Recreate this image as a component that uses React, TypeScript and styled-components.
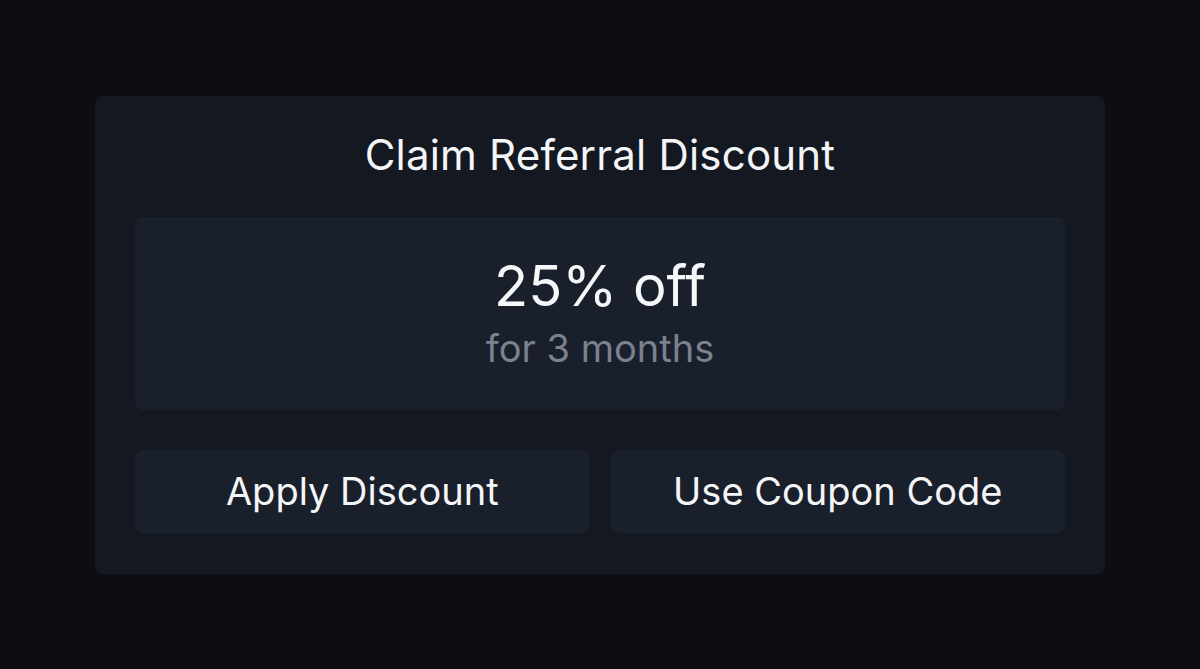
import React from 'react'
import styled, { createGlobalStyle } from 'styled-components'

const GlobalStyle = createGlobalStyle`
    html, body {
        margin: 0;
        padding: 0;
        background: #0c0e13;
    }
    body {
        font-family: Inter, 'Noto Sans', 'Liberation Sans', sans-serif;
        -webkit-font-smoothing: antialiased;
    }
`

const Page = styled.div`
    min-height: 100vh;
    display: flex;
    align-items: center;
    justify-content: center;
`

const Card = styled.section`
    width: 1010px;
    box-sizing: border-box;
    padding: 38px 40px 41px;
    background: #141821;
    border-radius: 7px;
    display: flex;
    flex-direction: column;
    gap: 40px;
`

const Title = styled.h2`
    margin: 0 0 2px;
    color: #f4f5f7;
    font-weight: 400;
    font-size: 42px;
    line-height: 41px;
    letter-spacing: 0.2px;
    text-align: center;
`

const OfferBox = styled.div`
    background: #1a1f2c;
    border-radius: 8px;
    height: 193px;
    display: flex;
    flex-direction: column;
    align-items: center;
    justify-content: center;
    gap: 6px;
    padding-bottom: 2px;
    box-sizing: border-box;
`

const Amount = styled.div`
    color: #f6f7f9;
    font-size: 56px;
    line-height: 66px;
`

const Period = styled.div`
    color: #7b818e;
    font-size: 38px;
    line-height: 46px;
`

const Actions = styled.div`
    display: grid;
    grid-template-columns: 1fr 1fr;
    gap: 21px;
`

const ActionButton = styled.button`
    height: 83px;
    border: none;
    border-radius: 8px;
    background: #1a1f2c;
    color: #f4f5f7;
    font-family: inherit;
    font-size: 38px;
    cursor: pointer;
`

export default function App() {
    return (
        <Page>
            <GlobalStyle />
            <Card>
                <Title>Claim Referral Discount</Title>
                <OfferBox>
                    <Amount>25% off</Amount>
                    <Period>for 3 months</Period>
                </OfferBox>
                <Actions>
                    <ActionButton>Apply Discount</ActionButton>
                    <ActionButton>Use Coupon Code</ActionButton>
                </Actions>
            </Card>
        </Page>
    )
}
